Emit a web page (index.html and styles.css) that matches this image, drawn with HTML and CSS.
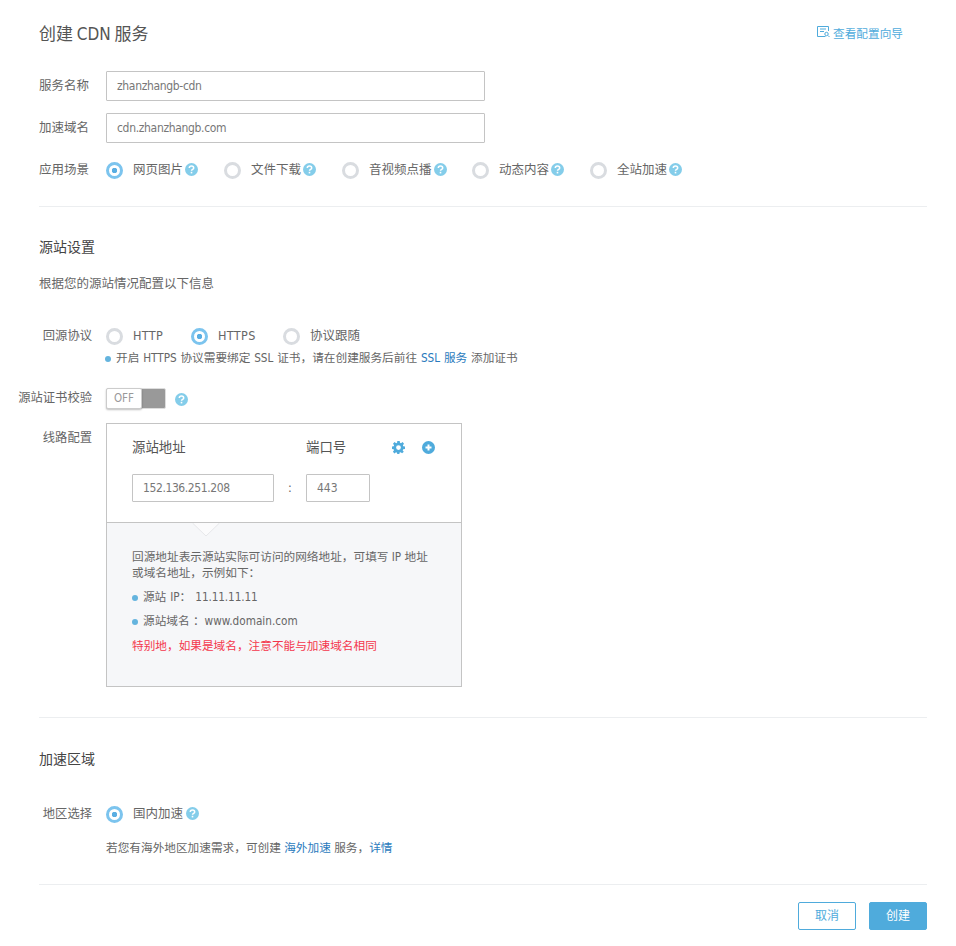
FILE: index.html
```html
<!DOCTYPE html>
<html lang="zh-CN">
<head>
<meta charset="utf-8">
<title>创建 CDN 服务</title>
<link rel="stylesheet" href="styles.css">
</head>
<body>
<main class="page">
  <header class="head">
    <h1 class="title">创建 CDN 服务</h1>
    <a class="guide">
      <svg class="guide-icon" width="13" height="12" viewBox="0 0 13 12" fill="none" stroke="#4fabdc"><path d="M11.5 5V.5H.5v10h8"/><path d="M3 3h6M3 5.5h4" /><circle cx="9.5" cy="8" r="1.7"/><path d="M11 9.5l1.5 1.5"/></svg>
      查看配置向导
    </a>
  </header>

  <section class="basic">
    <div class="row row-input">
      <span class="label label-left">服务名称</span>
      <div class="input input-wide">zhanzhangb-cdn</div>
    </div>
    <div class="row row-input">
      <span class="label label-left">加速域名</span>
      <div class="input input-wide">cdn.zhanzhangb.com</div>
    </div>
    <div class="row row-scenes">
      <span class="label label-left">应用场景</span>
      <div class="radios">
        <span class="radio w118 on"><i class="ring"></i><span class="rtext">网页图片</span><svg class="help" viewBox="0 0 13 13"><use href="#q"/></svg></span>
        <span class="radio w118"><i class="ring"></i><span class="rtext">文件下载</span><svg class="help" viewBox="0 0 13 13"><use href="#q"/></svg></span>
        <span class="radio w130"><i class="ring"></i><span class="rtext">音视频点播</span><svg class="help" viewBox="0 0 13 13"><use href="#q"/></svg></span>
        <span class="radio w118"><i class="ring"></i><span class="rtext">动态内容</span><svg class="help" viewBox="0 0 13 13"><use href="#q"/></svg></span>
        <span class="radio"><i class="ring"></i><span class="rtext">全站加速</span><svg class="help" viewBox="0 0 13 13"><use href="#q"/></svg></span>
      </div>
    </div>
  </section>

  <section class="section origin">
    <h2 class="sub">源站设置</h2>
    <p class="desc">根据您的源站情况配置以下信息</p>
    <div class="row row-proto">
      <span class="label">回源协议</span>
      <div class="radios">
        <span class="radio w85"><i class="ring"></i><span class="rtext">HTTP</span></span>
        <span class="radio w92 on"><i class="ring"></i><span class="rtext">HTTPS</span></span>
        <span class="radio"><i class="ring"></i><span class="rtext">协议跟随</span></span>
      </div>
    </div>
    <p class="note note-ssl"><i class="dot"></i>开启 HTTPS 协议需要绑定 SSL 证书，请在创建服务后前往 <a class="link">SSL 服务</a> 添加证书</p>
    <div class="row row-toggle">
      <span class="label">源站证书校验</span>
      <div class="toggle"><span class="knob">OFF</span></div>
      <svg class="help help-toggle" viewBox="0 0 13 13"><use href="#q"/></svg>
    </div>
    <div class="row row-line">
      <span class="label">线路配置</span>
      <div class="panel">
        <div class="panel-top">
          <div class="panel-head">
            <span class="col-addr">源站地址</span>
            <span class="col-port">端口号</span>
            <svg class="tool" width="13" height="13" viewBox="0 0 13 13"><path fill="#4fabdc" fill-rule="evenodd" d="M5.3 0h2.4l.3 1.8 1 .4L10.600 1.100 12 2.800 10.900 4.300l.3 1 1.800.3v2.400l-1.800.3-.4 1-.1.1 1.100 1.400-1.700 1.500-1.500-1.100-1 .4-.3 1.800H5.300L5 11.700l-1-.4-1.500 1.100-1.600-1.600L2 9.300l-.4-1L0 8V5.600l1.700-.3.400-1L1 2.800l1.600-1.700 1.500 1.100 1-.4zM6.500 4.200a2.400 2.400 0 1 0 0 4.800 2.400 2.400 0 0 0 0-4.800z"/></svg>
            <svg class="tool tool-add" width="13" height="13" viewBox="0 0 13 13"><path fill="#4fabdc" fill-rule="evenodd" d="M6.500 0a6.500 6.500 0 1 1 0 13 6.500 6.500 0 0 1 0-13zM5.500 3.500v2h-2v2h2v2h2v-2h2v-2h-2v-2z"/></svg>
          </div>
          <div class="panel-inputs">
            <div class="input input-addr">152.136.251.208</div>
            <span class="colon">:</span>
            <div class="input input-port">443</div>
          </div>
        </div>
        <div class="panel-tip">
          <svg class="arrow" width="28" height="14" viewBox="0 0 28 14"><path d="M.5 0L14 13 27.500 0" fill="#fbfbfc" stroke="#e6e7ea"/></svg>
          <p class="tip-text">回源地址表示源站实际可访问的网络地址，可填写 IP 地址或域名地址，示例如下：</p>
          <p class="tip-item tip-ip"><i class="dot"></i>源站 IP： 11.11.11.11</p>
          <p class="tip-item"><i class="dot"></i>源站域名 ：www.domain.com</p>
          <p class="tip-warn">特别地，如果是域名，注意不能与加速域名相同</p>
        </div>
      </div>
    </div>
  </section>

  <section class="section region">
    <h2 class="sub">加速区域</h2>
    <div class="row row-region">
      <span class="label">地区选择</span>
      <span class="radio on"><i class="ring"></i><span class="rtext">国内加速</span><svg class="help help-region" viewBox="0 0 13 13"><use href="#q"/></svg></span>
    </div>
    <p class="note note-region">若您有海外地区加速需求，可创建 <a class="link">海外加速</a> 服务，<a class="link">详情</a></p>
  </section>

  <footer class="actions">
    <button class="btn btn-ghost" type="button">取消</button>
    <button class="btn btn-primary" type="button">创建</button>
  </footer>
</main>
<svg class="defs" width="0" height="0" aria-hidden="true">
  <symbol id="q" viewBox="0 0 13 13">
    <circle cx="6.500" cy="6.500" r="6.500" fill="#84cdea"/>
    <path d="M4.300 5.100c0-1.300 1-2 2.200-2 1.300 0 2.200.8 2.200 1.800 0 1.500-2.200 1.500-2.200 2.800" fill="none" stroke="#fff" stroke-width="1.500"/>
    <rect x="5.700" y="8.800" width="1.600" height="1.600" fill="#fff"/>
  </symbol>
</svg>
</body>
</html>
```
FILE: styles.css
```css
* { box-sizing: border-box; }
html, body { margin: 0; padding: 0; background: #fff; }
body {
  font-family: "DejaVu Sans", "Noto Sans CJK SC", sans-serif;
  font-stretch: condensed;
  font-size: 12.5px;
  color: #666;
  line-height: 18px;
}
p, h1, h2 { margin: 0; font-weight: 400; }
.page { width: 956px; padding: 0 29px 16px 39px; }
.head { display: flex; justify-content: space-between; align-items: center; height: 67px; padding-right: 24px; }
.title { font-size: 17px; color: #555; line-height: 24px; word-spacing: -1px; }
.guide { display: flex; align-items: center; color: #4fabdc; font-size: 11.67px; }
.guide-icon { margin: -4px 3px 0 0; }

.row { display: flex; align-items: center; }
.label { width: 53px; margin-right: 14px; white-space: nowrap; flex: none; display: flex; justify-content: flex-end; font-size: 12.3px; }
.label-left { justify-content: flex-start; font-size: 12.5px; }
.row-input { height: 30px; margin: 4px 0 12px; }
.input { height: 30px; border: 1px solid #c4c4c4; border-radius: 1px; padding-left: 10px; line-height: 29px; color: #777; font-size: 12px; }
.input-wide { width: 379px; letter-spacing: -.33px; }
.row-scenes { height: 20px; margin-top: 17px; }
.radios { display: flex; align-items: center; }
.radio { display: inline-flex; align-items: center; }
.w118 { width: 118px; }
.w130 { width: 130px; }
.w85 { width: 85px; }
.w92 { width: 92px; }
.w85 .rtext, .w92 .rtext { letter-spacing: .35px; }
.ring { width: 17px; height: 17px; border-radius: 50%; border: 3px solid #d9dce0; margin-right: 10px; flex: none; background: #fff; }
.on .ring { border-color: #7cc4ee; background: radial-gradient(circle, #5aaee2 0 2.500px, #fff 3px); }
.help { width: 13px; height: 13px; margin: -2px 0 0 2px; flex: none; }

.basic { padding-bottom: 26px; border-bottom: 1px solid #eceef0; }
.section { border-bottom: 1px solid #eceef0; }
.sub { font-size: 14px; color: #444; line-height: 20px; }
.origin { padding: 30px 0 30px; }
.desc { margin-top: 17px; line-height: 20px; }
.row-proto { height: 20px; margin-top: 32px; }
.note { margin: 3px 0 0 67px; line-height: 18px; font-size: 11.67px; white-space: nowrap; }
.note-ssl { word-spacing: .5px; }
.dot { display: inline-block; width: 6px; height: 6px; border-radius: 50%; background: #64b4de; margin-right: 5px; vertical-align: 0; }
.note > .dot { margin-left: -1px; }
.link { color: #2b7bbd; }
.row-toggle { height: 20px; margin-top: 21px; }
.toggle { width: 60px; height: 21px; background: #999; border: 1px solid #ddd; position: relative; border-radius: 2px; }
.knob { display: block; width: 36px; height: 21px; margin: -1px 0 0 -1px; background: #fff; border: 1px solid #ccc; border-radius: 2px; box-shadow: 0 1px 2px rgba(0,0,0,.25); text-align: center; font-size: 11.5px; line-height: 19px; color: #999; }
.help-toggle { margin: 3px 0 0 9px; }
.row-line { align-items: flex-start; margin-top: 15px; }
.row-line .label { margin-top: 6px; }
.panel { width: 356px; height: 264px; border: 1px solid #c4c4c4; display: flex; flex-direction: column; }
.panel-top { height: 98px; padding: 14px 25px 0; flex: none; }
.panel-head { display: flex; align-items: center; height: 20px; font-size: 13.4px; color: #555; }
.col-addr { width: 174px; }
.col-port { width: 86px; }
.tool { flex: none; margin-top: -2px; }
.tool-add { margin-left: 17px; }
.panel-inputs { display: flex; align-items: center; margin-top: 16px; }
.input-addr { width: 142px; height: 28px; line-height: 27px; letter-spacing: -.4px; }
.colon { width: 32px; text-align: center; }
.input-port { width: 64px; height: 28px; line-height: 27px; }
.panel-tip { flex: 1; background: #f6f7f9; border-top: 1px solid #c4c4c4; padding: 26px 25px 0; position: relative; font-size: 11.67px; }
.arrow { position: absolute; top: 0; left: 85px; display: block; }
.tip-text { line-height: 16px; }
.tip-item { margin-top: 8px; line-height: 16px; }
.tip-ip { word-spacing: 1px; letter-spacing: -.1px; }
.tip-warn { margin-top: 9px; line-height: 16px; color: #f4364c; }
.region { padding: 31px 0 27px; }
.row-region { height: 20px; margin-top: 35px; }
.note-region { margin-top: 15px; }
.help-region { margin-left: 3px; }
.actions { display: flex; justify-content: flex-end; gap: 13px; margin-top: 17px; }
.btn { width: 58px; height: 28px; border-radius: 2px; font: inherit; font-size: 12px; padding: 0; }
.btn-ghost { background: #fff; border: 1px solid #4fabdc; color: #4fabdc; }
.btn-primary { background: #4fabdc; border: 1px solid #4fabdc; color: #fff; }
.defs { position: absolute; }
```
